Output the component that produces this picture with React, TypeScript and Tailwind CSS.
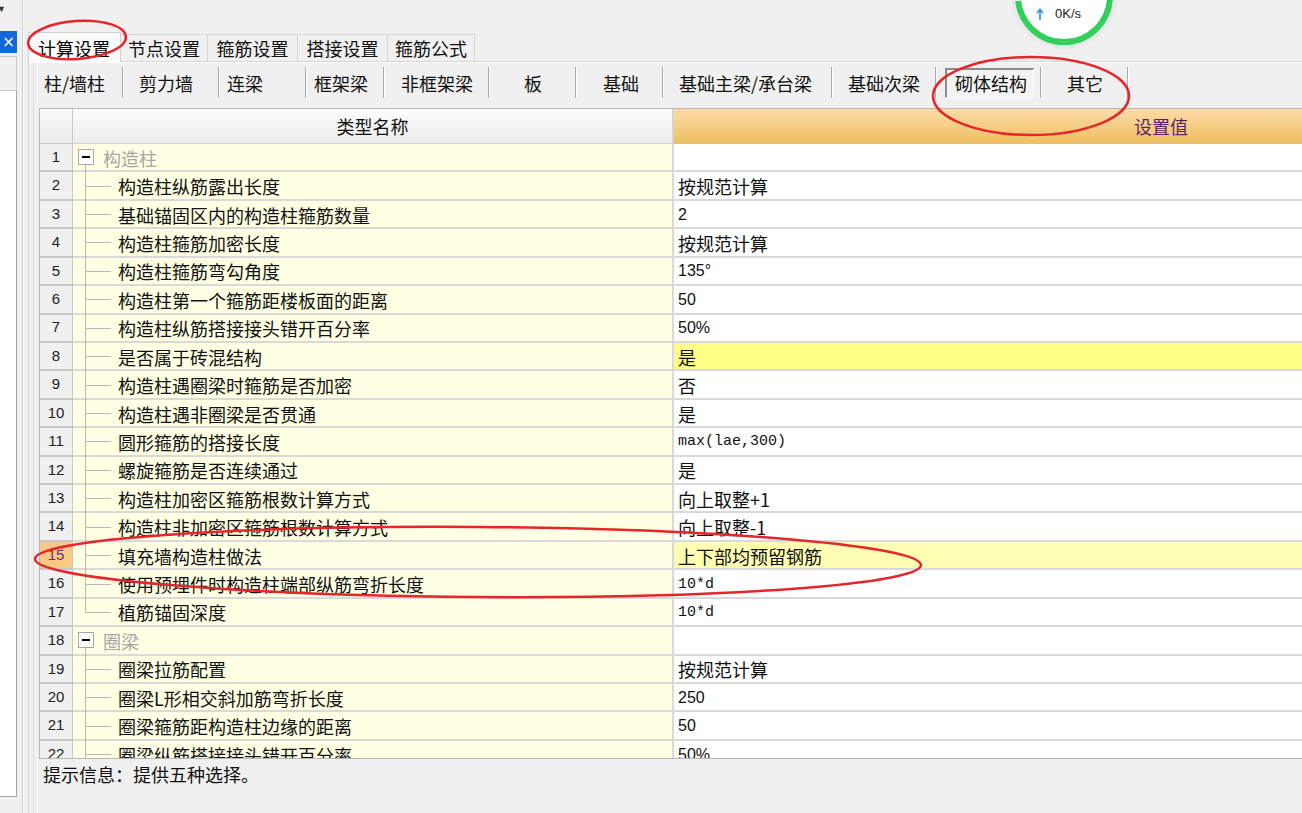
import React from "react";

type Row = {
  n: number;
  kind: "group" | "item";
  name: string;
  value?: string;
  mono?: boolean;
  num?: boolean;
  last?: boolean;
  hl?: "yellow" | "sel";
};

const rows: Row[] = [
  { n: 1, kind: "group", name: "构造柱" },
  { n: 2, kind: "item", name: "构造柱纵筋露出长度", value: "按规范计算" },
  { n: 3, kind: "item", name: "基础锚固区内的构造柱箍筋数量", value: "2", num: true },
  { n: 4, kind: "item", name: "构造柱箍筋加密长度", value: "按规范计算" },
  { n: 5, kind: "item", name: "构造柱箍筋弯勾角度", value: "135°", num: true },
  { n: 6, kind: "item", name: "构造柱第一个箍筋距楼板面的距离", value: "50", num: true },
  { n: 7, kind: "item", name: "构造柱纵筋搭接接头错开百分率", value: "50%", num: true },
  { n: 8, kind: "item", name: "是否属于砖混结构", value: "是", hl: "yellow" },
  { n: 9, kind: "item", name: "构造柱遇圈梁时箍筋是否加密", value: "否" },
  { n: 10, kind: "item", name: "构造柱遇非圈梁是否贯通", value: "是" },
  { n: 11, kind: "item", name: "圆形箍筋的搭接长度", value: "max(lae,300)", mono: true },
  { n: 12, kind: "item", name: "螺旋箍筋是否连续通过", value: "是" },
  { n: 13, kind: "item", name: "构造柱加密区箍筋根数计算方式", value: "向上取整+1" },
  { n: 14, kind: "item", name: "构造柱非加密区箍筋根数计算方式", value: "向上取整-1" },
  { n: 15, kind: "item", name: "填充墙构造柱做法", value: "上下部均预留钢筋", hl: "sel" },
  { n: 16, kind: "item", name: "使用预埋件时构造柱端部纵筋弯折长度", value: "10*d", mono: true },
  { n: 17, kind: "item", name: "植筋锚固深度", value: "10*d", mono: true, last: true },
  { n: 18, kind: "group", name: "圈梁" },
  { n: 19, kind: "item", name: "圈梁拉筋配置", value: "按规范计算" },
  { n: 20, kind: "item", name: "圈梁L形相交斜加筋弯折长度", value: "250", num: true },
  { n: 21, kind: "item", name: "圈梁箍筋距构造柱边缘的距离", value: "50", num: true },
  { n: 22, kind: "item", name: "圈梁纵筋搭接接头错开百分率", value: "50%", num: true },
];

const topTabs = [
  { label: "节点设置", w: "w-[87px]" },
  { label: "箍筋设置", w: "w-[90px]" },
  { label: "搭接设置", w: "w-[90px]" },
  { label: "箍筋公式", w: "w-[87px]" },
];

const subTabs = [
  { label: "柱/墙柱", w: "w-[90px]", pl: "pl-[10px]" },
  { label: "剪力墙", w: "w-[96px]", pl: "pl-[15px]" },
  { label: "连梁", w: "w-[87px]", pl: "pl-[7px]" },
  { label: "框架梁", w: "w-[78px]", pl: "pl-[7px]" },
  { label: "非框架梁", w: "w-[105px]", pl: "pl-[16px]" },
  { label: "板", w: "w-[87px]", pl: "pl-[34px]" },
  { label: "基础", w: "w-[87px]", pl: "pl-[26px]" },
  { label: "基础主梁/承台梁", w: "w-[169px]", pl: "pl-[15px]" },
  { label: "基础次梁", w: "w-[104px]", pl: "pl-[15px]" },
  { label: "砌体结构", w: "w-[105px]", pl: "pl-[8px]", active: true },
  { label: "其它", w: "w-[87px]", pl: "pl-[25px]" },
];

const cjk = "font-['Noto_Sans_CJK_SC',sans-serif]";

function TreeCell({ row }: { row: Row }) {
  if (row.kind === "group") {
    return (
      <div className="relative w-[30px] self-stretch shrink-0">
        <div className="absolute left-[5px] top-1/2 -translate-y-1/2 w-[16px] h-[16px] border border-[#a9a9a9] bg-white flex items-center justify-center">
          <div className="w-[8px] h-[2px] bg-black" />
        </div>
        <div className="absolute left-[12px] top-[calc(50%+8px)] bottom-[-2px] w-[1px] bg-[#b9b9b9]" />
      </div>
    );
  }
  return (
    <div className="relative w-[45px] self-stretch shrink-0">
      <div
        className={
          row.last
            ? "absolute left-[12px] top-[-1px] h-[calc(50%+1px)] w-[1px] bg-[#b9b9b9]"
            : "absolute left-[12px] top-[-1px] bottom-[-2px] w-[1px] bg-[#b9b9b9]"
        }
      />
      <div className="absolute left-[12px] top-1/2 w-[26px] h-[1px] bg-[#b9b9b9]" />
    </div>
  );
}

function GridRow({ row }: { row: Row }) {
  const sel = row.hl === "sel";
  const valueBg =
    row.hl === "yellow" ? "bg-[#ffff88]" : sel ? "bg-[#ffffb4]" : "bg-white";
  const valueFont = row.mono
    ? "font-['Liberation_Mono',monospace] text-[15px]"
    : row.num
    ? "font-['Liberation_Sans',sans-serif] text-[16px]"
    : `${cjk} text-[18px]`;
  return (
    <div className="flex h-[28.43px] shrink-0">
      <div
        className={`w-[33px] shrink-0 flex items-center justify-center border-r border-b-2 border-[#c8c8c8] font-['Liberation_Sans',sans-serif] text-[15px] ${
          sel ? "bg-[#f9c985] text-[#6b2f79]" : "bg-[#f0f0f0] text-[#222]"
        }`}
      >
        {row.n}
      </div>
      <div className="w-[601px] shrink-0 flex items-center bg-[#ffffe3] border-r-2 border-b-2 border-[#d9d9d9]">
        <TreeCell row={row} />
        <span
          className={`${cjk} text-[18px] leading-none whitespace-nowrap pt-[1px] ${
            row.kind === "group" ? "text-[#a6a6a6]" : "text-[#111]"
          }`}
        >
          {row.name}
        </span>
      </div>
      <div
        className={`w-[974px] shrink-0 flex items-center pl-[4px] border-b-2 border-[#d9d9d9] ${valueBg}`}
      >
        <span className={`${valueFont} leading-none whitespace-nowrap pt-[1px] text-[#111]`}>
          {row.value}
        </span>
      </div>
    </div>
  );
}

function NetWidget() {
  return (
    <div className="absolute left-[1009px] top-[-59px] w-[110px] h-[110px]">
      <svg width="110" height="110" viewBox="0 0 110 110">
        <circle cx="55" cy="55" r="53" fill="#e6e6e6" opacity="0.7" />
        <circle cx="55" cy="55" r="46" fill="#ffffff" stroke="#33cf5c" strokeWidth="6" />
        <path d="M 9.3 60 A 46 46 0 0 1 9.8 46" fill="none" stroke="#e9ecea" strokeWidth="6" />
        <path d="M 31 69 L 31 79 M 28 72 L 31 68.5 L 34 72" stroke="#2b8fe6" strokeWidth="1.6" fill="none" />
      </svg>
      <span className="absolute left-[46px] top-[66px] font-['Liberation_Sans',sans-serif] text-[13px] leading-none text-[#222]">
        0K/s
      </span>
    </div>
  );
}

export default function App() {
  return (
    <div className="relative w-[1302px] h-[813px] overflow-hidden bg-[#f0f0f0] flex text-black">
      {/* left docked strip */}
      <div className="w-[17px] shrink-0 flex flex-col">
        <div className="h-[31px] relative">
          <span className="absolute left-[-3px] top-[2px] text-[9px] text-[#333]">▼</span>
        </div>
        <div className="h-[22px] bg-[#1467d9] flex items-center justify-center text-white text-[15px] leading-none font-['DejaVu_Sans',sans-serif]">
          ×
        </div>
        <div className="h-[3px]" />
        <div className="h-[35px] border-t border-b border-r border-[#c9c9c9] bg-[#f0f0f0]" />
        <div className="flex-1 bg-white border-r border-b border-[#a5a5a5]" />
        <div className="h-[16px]" />
      </div>
      <div className="w-[11px] shrink-0 flex justify-center">
        <div className="w-[2px] h-full border-l border-[#d2d2d2] bg-white/60" />
      </div>

      {/* main */}
      <div className="flex-1 flex flex-col min-w-0">
        <div className="h-[31px] shrink-0" />
        {/* top tabs */}
        <div className={`h-[30px] shrink-0 flex items-end ${cjk} text-[18px] leading-none`}>
          <div className="w-[93px] h-[30px] shrink-0 bg-[#fbfbfb] border-t border-l border-r border-[#d0d0d0] flex items-center pl-[9px] z-10 relative top-[1px]">
            计算设置
          </div>
          {topTabs.map((t) => (
            <div
              key={t.label}
              className={`${t.w} h-[27px] shrink-0 bg-[#f0f0f0] border-t border-r border-[#d6d6d6] flex items-center justify-center text-[#111]`}
            >
              {t.label}
            </div>
          ))}
        </div>
        {/* tab page */}
        <div className="flex-1 flex flex-col border-t border-l border-[#d6d6d6] bg-[#f0f0f0] min-h-0">
          <div className="h-[1px] bg-white shrink-0" />
          <div className="flex-1 flex flex-col pl-[4px] min-h-0">
            <div className="flex-1 flex flex-col border-l border-[#dcdcdc] min-h-0">
              {/* sub tabs */}
              <div className={`h-[45px] shrink-0 flex items-start pt-[4px] ${cjk} text-[18px] leading-none text-[#111]`}>
                {subTabs.map((t) => (
                  <div key={t.label} className={`${t.w} h-[31px] shrink-0 flex items-center relative`}>
                    {t.active ? (
                      <div className="ml-[8px] w-[89px] h-[30px] border-t-2 border-l-2 border-[#8a8a8a] border-b border-r border-b-white border-r-white bg-[#f3f3f3] flex items-center pl-[8px]">
                        {t.label}
                      </div>
                    ) : (
                      <span className={t.pl}>{t.label}</span>
                    )}
                    <div className="absolute right-0 top-0 h-full w-[2px] border-l border-[#a8a8a8] bg-white" />
                  </div>
                ))}
              </div>

              {/* grid */}
              <div className="h-[651px] shrink-0 ml-[5px] border-t border-l border-b border-[#b7b7b7] overflow-hidden flex flex-col bg-white">
                <div className={`flex h-[35px] shrink-0 ${cjk} text-[18px] leading-none`}>
                  <div className="w-[33px] shrink-0 bg-gradient-to-b from-[#fafafa] to-[#ebebeb] border-r border-b border-[#c8c8c8]" />
                  <div className="w-[601px] shrink-0 bg-gradient-to-b from-[#fdfdfd] to-[#ebebeb] border-r-2 border-b border-[#d3d3d3] flex items-center justify-center text-[#111]">
                    类型名称
                  </div>
                  <div className="w-[974px] shrink-0 bg-gradient-to-b from-[#fbdba6] to-[#efbf5f] border-b border-[#d8c08a] flex items-center justify-center text-[#5e1f6e]">
                    设置值
                  </div>
                </div>
                {rows.map((r) => (
                  <GridRow key={r.n} row={r} />
                ))}
              </div>

              {/* hint */}
              <div className={`pt-[6px] pl-[9px] ${cjk} text-[18px] leading-none text-[#111]`}>
                提示信息：提供五种选择。
              </div>
            </div>
          </div>
        </div>
      </div>

      <NetWidget />

      {/* red annotation marks */}
      <svg className="absolute inset-0 z-20 pointer-events-none" width="1302" height="813" viewBox="0 0 1302 813">
        <ellipse cx="77" cy="40" rx="49" ry="19" fill="none" stroke="#e5262b" strokeWidth="2.5" transform="rotate(-4 77 40)" />
        <ellipse cx="1031" cy="96" rx="98" ry="39" fill="none" stroke="#e5262b" strokeWidth="2.5" />
        <ellipse cx="478" cy="562" rx="443" ry="35" fill="none" stroke="#e5262b" strokeWidth="2.5" transform="rotate(0.4 478 562)" />
      </svg>
    </div>
  );
}
